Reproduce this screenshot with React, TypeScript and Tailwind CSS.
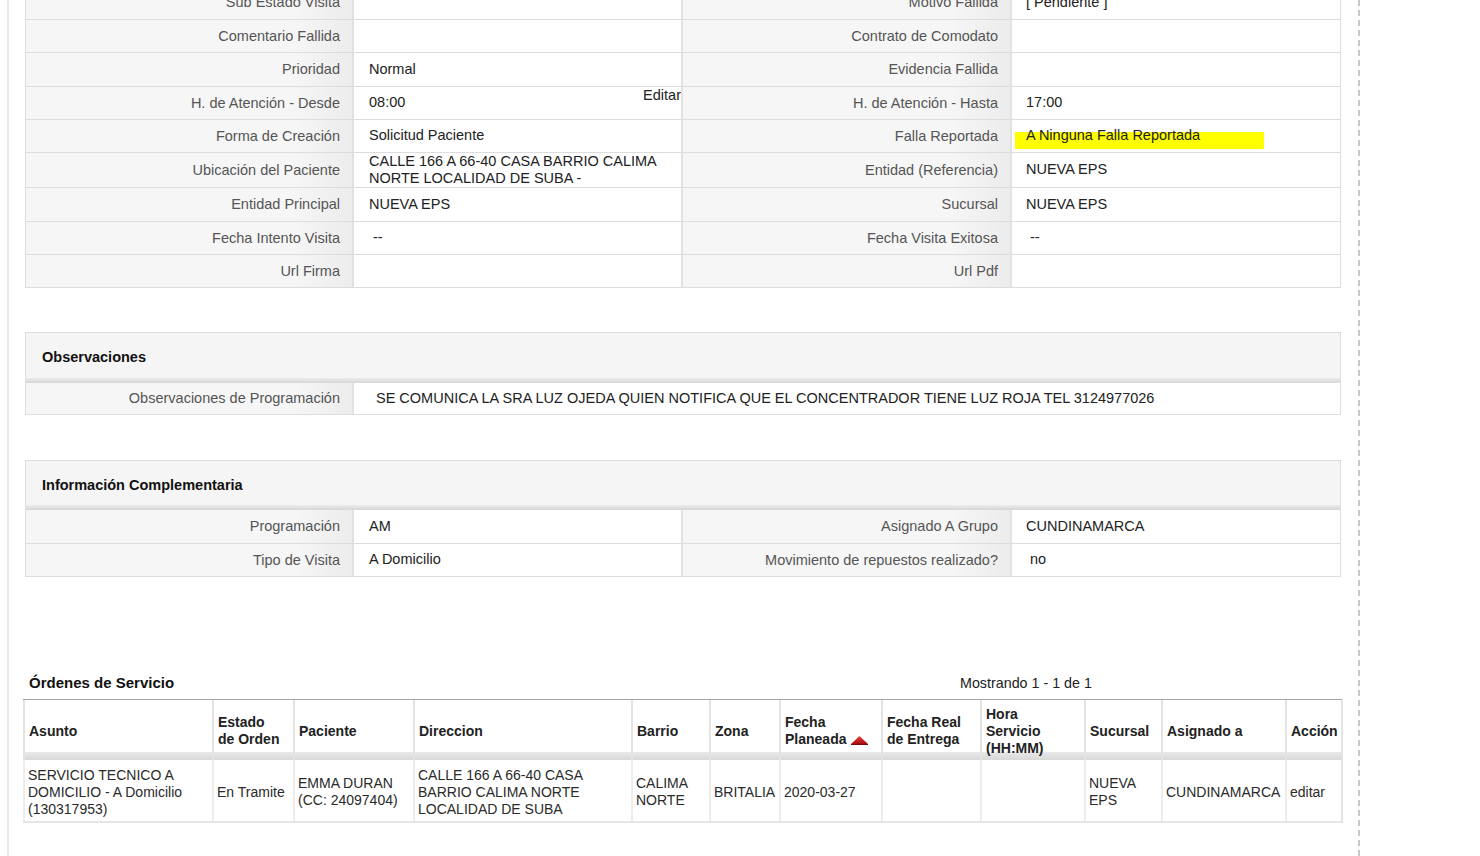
import type { ReactNode } from "react";

type Row = { h: string; l1: string; v1: ReactNode; l2: string; v2: ReactNode };

const topRows: Row[] = [
  { h: "h-[33px]", l1: "Sub Estado Visita", v1: "", l2: "Motivo Fallida", v2: "[ Pendiente ]" },
  { h: "h-[33px]", l1: "Comentario Fallida", v1: "", l2: "Contrato de Comodato", v2: "" },
  { h: "h-[34px]", l1: "Prioridad", v1: "Normal", l2: "Evidencia Fallida", v2: "" },
  {
    h: "h-[33px]",
    l1: "H. de Atención - Desde",
    v1: <>08:00<span className="absolute right-0 top-0 leading-[16px]">Editar</span></>,
    l2: "H. de Atención - Hasta",
    v2: "17:00",
  },
  {
    h: "h-[33px]",
    l1: "Forma de Creación",
    v1: "Solicitud Paciente",
    l2: "Falla Reportada",
    v2: <>
      <span className="absolute left-[3px] top-[12px] h-[17px] w-[249px] bg-[#ffff00]" />
      <span className="relative">A Ninguna Falla Reportada</span>
    </>,
  },
  {
    h: "h-[35px]",
    l1: "Ubicación del Paciente",
    v1: <span>CALLE 166 A 66-40 CASA BARRIO CALIMA<br />NORTE LOCALIDAD DE SUBA -</span>,
    l2: "Entidad (Referencia)",
    v2: "NUEVA EPS",
  },
  { h: "h-[34px]", l1: "Entidad Principal", v1: "NUEVA EPS", l2: "Sucursal", v2: "NUEVA EPS" },
  { h: "h-[33px]", l1: "Fecha Intento Visita", v1: <span className="pl-[4px]">--</span>, l2: "Fecha Visita Exitosa", v2: <span className="pl-[4px]">--</span> },
  { h: "h-[33px]", l1: "Url Firma", v1: "", l2: "Url Pdf", v2: "" },
];

const infoRows: Row[] = [
  { h: "h-[33px]", l1: "Programación", v1: "AM", l2: "Asignado A Grupo", v2: "CUNDINAMARCA" },
  { h: "h-[33px]", l1: "Tipo de Visita", v1: "A Domicilio", l2: "Movimiento de repuestos realizado?", v2: <span className="pl-[4px]">no</span> },
];

function Label({ children }: { children: ReactNode }) {
  return (
    <div className="flex items-center justify-end overflow-hidden border-r-2 border-r-[#e2e2e2] bg-[linear-gradient(90deg,#f6f6f6_82%,#ececec)] pb-[1px] pr-[12px] text-[#555]">
      {children}
    </div>
  );
}

function Value({ children, pl = "pl-[15px]", last }: { children: ReactNode; pl?: string; last?: boolean }) {
  return (
    <div className={`relative flex items-center overflow-hidden bg-white pb-[1px] pr-[10px] leading-[17px] text-[#222] ${pl} ${last ? "" : "border-r-2 border-r-[#e2e2e2]"}`}>
      {children}
    </div>
  );
}

function FormRows({ rows }: { rows: Row[] }) {
  return (
    <>
      {rows.map((r, i) => (
        <div
          key={r.l1}
          className={`grid grid-cols-[328px_329px_329px_1fr] ${r.h} ${i === 0 ? "" : "border-t border-t-[#dddddd]"}`}
        >
          <Label>{r.l1}</Label>
          <Value>{r.v1}</Value>
          <Label>{r.l2}</Label>
          <Value pl="pl-[14px]" last>{r.v2}</Value>
        </div>
      ))}
    </>
  );
}

function SectionHeader({ title, h }: { title: string; h: string }) {
  return (
    <>
      <div className={`flex items-center bg-[#f5f5f5] pl-[16px] pt-[3px] text-[14.5px] font-bold text-[#111] ${h}`}>{title}</div>
      <div className="h-[5px] bg-[linear-gradient(#ececec,#d6d6d6)]" />
    </>
  );
}

const cols = "grid-cols-[189px_81px_120px_218px_78px_70px_102px_99px_104px_77px_124px_56px]";

function SortUp() {
  return (
    <svg width="17" height="9" viewBox="0 0 17 9" className="ml-[5px] inline-block align-[-1px]">
      <defs>
        <linearGradient id="red" x1="0" y1="0" x2="0" y2="1">
          <stop offset="0" stopColor="#e64040" />
          <stop offset="1" stopColor="#a80c0c" />
        </linearGradient>
      </defs>
      <polygon points="8.5,0 17,8 0,8" fill="url(#red)" />
      <rect x="0" y="8" width="17" height="1" fill="#7a0a0a" />
    </svg>
  );
}

const heads: ReactNode[] = [
  "Asunto",
  <>Estado<br />de Orden</>,
  "Paciente",
  "Direccion",
  "Barrio",
  "Zona",
  <>Fecha<br />Planeada<SortUp /></>,
  <>Fecha Real<br />de Entrega</>,
  <>Hora<br />Servicio<br />(HH:MM)</>,
  "Sucursal",
  "Asignado a",
  "Acción",
];

const body: ReactNode[] = [
  "SERVICIO TECNICO A DOMICILIO - A Domicilio (130317953)",
  "En Tramite",
  "EMMA DURAN (CC: 24097404)",
  "CALLE 166 A 66-40 CASA BARRIO CALIMA NORTE LOCALIDAD DE SUBA",
  "CALIMA NORTE",
  "BRITALIA",
  "2020-03-27",
  "",
  "",
  "NUEVA EPS",
  "CUNDINAMARCA",
  "editar",
];

export default function App() {
  return (
    <div className="h-[856px] w-[1480px] overflow-hidden bg-white font-['Liberation_Sans',Arial,sans-serif] text-[14.5px] leading-[16px]">
      <div className="flex h-full">
        <div className="w-[7px] shrink-0" />
        <div className="w-[2px] shrink-0 bg-[#e8e8e8]" />
        <div className="w-[1349px] shrink-0 pl-[16px]">
          <div className="w-[1316px]">
            {/* visit details */}
            <div className="-mt-[15px] border border-[#dddddd]">
              <FormRows rows={topRows} />
            </div>

            {/* observaciones */}
            <div className="mt-[44px] border border-[#dddddd]">
              <SectionHeader title="Observaciones" h="h-[45px]" />
              <div className="grid h-[31px] grid-cols-[328px_1fr]">
                <Label>Observaciones de Programación</Label>
                <Value pl="pl-[22px]" last>SE COMUNICA LA SRA LUZ OJEDA QUIEN NOTIFICA QUE EL CONCENTRADOR TIENE LUZ ROJA TEL 3124977026</Value>
              </div>
            </div>

            {/* informacion complementaria */}
            <div className="mt-[45px] border border-[#dddddd]">
              <SectionHeader title="Información Complementaria" h="h-[44px]" />
              <FormRows rows={infoRows} />
            </div>

            {/* ordenes */}
            <div className="mt-[96px] flex h-[26px] items-end pb-[8px]">
              <div className="w-[935px] pl-[4px] text-[15px] font-bold text-[#111]">Órdenes de Servicio</div>
              <div className="text-[14.3px] text-[#222]">Mostrando 1 - 1 de 1</div>
            </div>
            <div className="-mx-[2px] border-r-2 border-t border-r-[#e3e3e3] border-t-[#a3a3a3] text-[14px]">
              <div className={`grid ${cols}`}>
                {heads.map((h, i) => (
                  <div
                    key={i}
                    className="flex h-[60px] items-center whitespace-nowrap border-l-2 border-[#e3e3e3] bg-[linear-gradient(#ffffff_52px,#e9e9e9_52px,#d8d8d8_60px)] pl-[4px] pt-[2px] font-bold leading-[17px] text-[#222]"
                  >
                    <div>{h}</div>
                  </div>
                ))}
              </div>
              <div className={`grid ${cols} border-b-2 border-[#e6e6e6]`}>
                {body.map((b, i) => (
                  <div key={i} className="flex h-[61px] items-center border-l-2 border-[#ececec] pl-[3px] pr-[3px] pt-[3px] leading-[17px] text-[#2a2a2a]">
                    <div>{b}</div>
                  </div>
                ))}
              </div>
            </div>
          </div>
        </div>
        <div className="w-[2px] shrink-0 border-l-2 border-dashed border-[#c8c8c8]" />
      </div>
    </div>
  );
}
